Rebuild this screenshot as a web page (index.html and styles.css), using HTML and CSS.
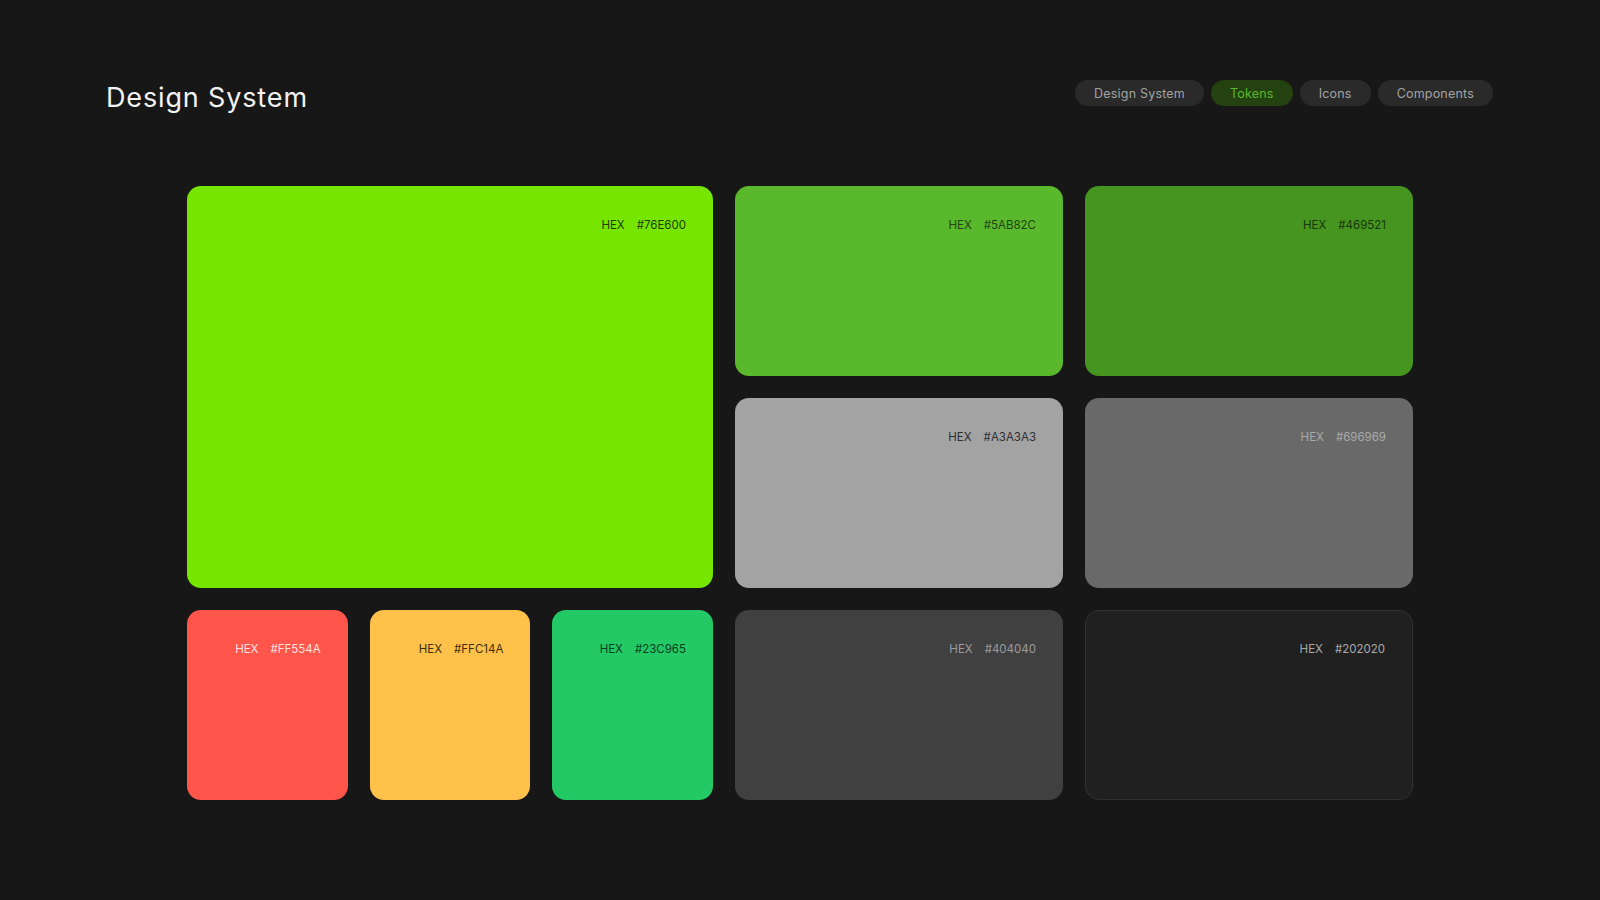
FILE: index.html
```html
<!DOCTYPE html>
<html lang="en">
<head>
    <meta charset="UTF-8">
    <meta name="viewport" content="width=device-width, initial-scale=1.0">
    <title>Design System</title>
    <link rel="stylesheet" href="styles.css">
</head>
<body>

    <header class="topbar">
        <h1 class="title">Design System</h1>
        <nav class="nav">
            <a class="pill" href="#">Design System</a>
            <a class="pill active" href="#">Tokens</a>
            <a class="pill" href="#">Icons</a>
            <a class="pill" href="#">Components</a>
        </nav>
    </header>

    <main class="palette">
        <div class="swatch big lime">
            <span class="hex">HEX</span><span>#76E600</span>
        </div>
        <div class="swatch green">
            <span class="hex">HEX</span><span>#5AB82C</span>
        </div>
        <div class="swatch forest">
            <span class="hex">HEX</span><span>#469521</span>
        </div>
        <div class="swatch silver">
            <span class="hex">HEX</span><span>#A3A3A3</span>
        </div>
        <div class="swatch grey">
            <span class="hex">HEX</span><span>#696969</span>
        </div>
        <div class="small-row">
            <div class="swatch red">
                <span class="hex">HEX</span><span>#FF554A</span>
            </div>
            <div class="swatch yellow">
                <span class="hex">HEX</span><span>#FFC14A</span>
            </div>
            <div class="swatch emerald">
                <span class="hex">HEX</span><span>#23C965</span>
            </div>
        </div>
        <div class="swatch charcoal">
            <span class="hex">HEX</span><span>#404040</span>
        </div>
        <div class="swatch ink">
            <span class="hex">HEX</span><span>#202020</span>
        </div>
    </main>

</body>
</html>
```

FILE: styles.css
```css
body {
    margin: 0;
    padding: 0;
    background-color: #171717;
    font-family: "Inter", "Noto Sans", sans-serif;
    height: 900px;
    overflow: hidden;
}

.topbar {
    display: flex;
    justify-content: space-between;
    align-items: center;
    padding: 80px 107px 0 106px;
    height: 26px;
}

.title {
    margin: 0;
    color: #f2f2f2;
    font-weight: 400;
    font-size: 27px;
    letter-spacing: 0.85px;
    position: relative;
    top: 4px;
}

.nav {
    display: flex;
    gap: 7px;
}

.pill {
    display: flex;
    align-items: center;
    height: 26px;
    padding: 0 19px;
    border-radius: 13px;
    background-color: #2a2a2a;
    color: #a3a3a3;
    font-size: 12.5px;
    letter-spacing: 0.2px;
    text-decoration: none;
}

.pill.active {
    background-color: #24420f;
    color: #5ab82c;
}

.palette {
    display: grid;
    grid-template-columns: 526px 328px 328px;
    grid-template-rows: 190px 190px 190px;
    gap: 22px;
    width: 1226px;
    margin: 80px auto 0;
}

.swatch {
    display: flex;
    justify-content: flex-end;
    align-items: flex-start;
    gap: 12px;
    padding: 32px 27px 0 0;
    border-radius: 14px;
    font-size: 11.5px;
    color: rgba(0, 0, 0, 0.72);
    box-sizing: border-box;
}

.big {
    grid-row: 1 / 3;
}

.small-row {
    display: grid;
    grid-template-columns: repeat(3, 1fr);
    gap: 22px;
}

.lime { background-color: #76e600; color: #1f3d00; }
.green { background-color: #5ab82c; color: #1f4410; }
.forest { background-color: #469521; color: #17360a; }
.silver { background-color: #a3a3a3; color: #2e2e2e; }
.grey { background-color: #696969; color: #a9a9a9; }
.red { background-color: #ff554a; color: #ffe3e0; }
.yellow { background-color: #ffc14a; color: #3e2e0c; }
.emerald { background-color: #23c965; color: #0b3d1e; }
.charcoal { background-color: #404040; color: #9c9c9c; }
.ink {
    background-color: #202020;
    color: #a8a8a8;
    border: 1px solid #323232;
    padding-top: 31px;
}
```
